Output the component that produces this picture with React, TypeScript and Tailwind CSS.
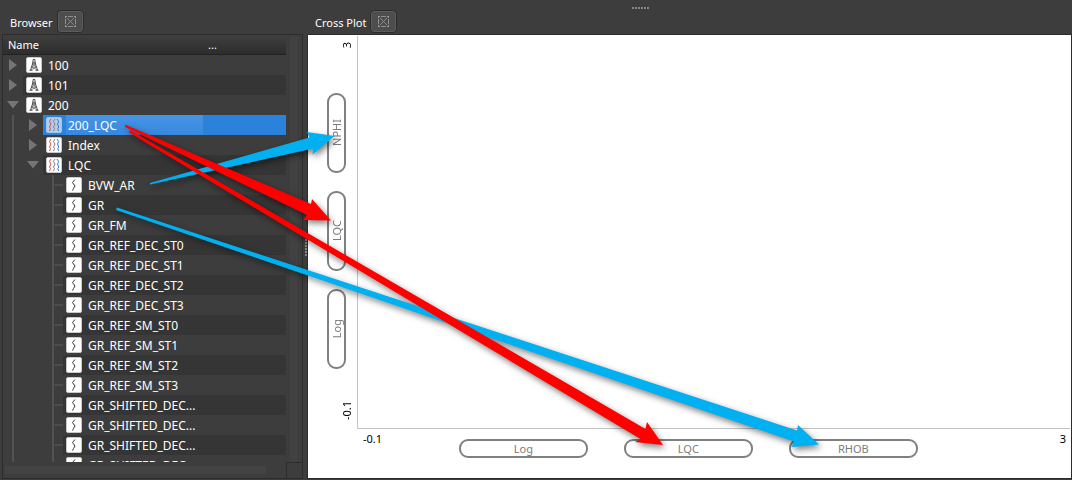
import React from "react";

type IconKind = "well" | "set" | "curve";
type Row = { label: string; level: number; icon: IconKind; open?: boolean; selected?: boolean };

const rows: Row[] = [
  { label: "100", level: 0, icon: "well", open: false },
  { label: "101", level: 0, icon: "well", open: false },
  { label: "200", level: 0, icon: "well", open: true },
  { label: "200_LQC", level: 1, icon: "set", open: false, selected: true },
  { label: "Index", level: 1, icon: "set", open: false },
  { label: "LQC", level: 1, icon: "set", open: true },
  ...[
    "BVW_AR",
    "GR",
    "GR_FM",
    "GR_REF_DEC_ST0",
    "GR_REF_DEC_ST1",
    "GR_REF_DEC_ST2",
    "GR_REF_DEC_ST3",
    "GR_REF_SM_ST0",
    "GR_REF_SM_ST1",
    "GR_REF_SM_ST2",
    "GR_REF_SM_ST3",
    "GR_SHIFTED_DEC...",
    "GR_SHIFTED_DEC...",
    "GR_SHIFTED_DEC...",
    "GR_SHIFTED_DEC...",
  ].map((label): Row => ({ label, level: 2, icon: "curve" })),
];

function NodeIcon({ kind, selected }: { kind: IconKind; selected?: boolean }) {
  return (
    <svg width="16" height="16" viewBox="0 0 16 16" className="shrink-0" fill="none" aria-hidden="true">
      <rect x="0.5" y="0.5" width="15" height="15" rx="1.5" fill={selected ? "#b4cdea" : "#fff"} stroke={selected ? "#a3c3e8" : "#c9c9c9"} />
      {kind === "well" && (
        <g stroke="#444" strokeWidth="0.9">
          <path d="M7 2.500h2M7.200 2.500L6.500 7 4.500 13M8.800 2.500L9.500 7l2 6M3.500 13.300h3M9.500 13.300h3" />
          <path d="M6.800 5.200h2.400M6.500 7.200h3L5.500 10h5L5 12.800M6.500 7.200l4 2.800M5.500 10l5.800 2.800M6.800 5.200l2.700 2M9.200 5.200l-2.700 2" strokeWidth="0.6" />
        </g>
      )}
      {kind === "set" && (
        <g strokeWidth="1">
          <path d="M5 2L3.500 4.500 5 7 3.500 10l1 1.500L3.500 14" stroke="#d2454f" />
          <path d="M9 2L7.300 4.500 9 7 7.500 10l1 1.500L7.500 14" stroke="#808080" />
          <path d="M11 2l1.700 2.500L11.500 7l1.300 3-1 1.500.8 2.500" stroke="#2f78cc" />
        </g>
      )}
      {kind === "curve" && <path d="M9 2.500L6.500 5.500 9 9l-1.500 2.500L6.500 13.500" stroke="#333" />}
    </svg>
  );
}

function Expander({ open }: { open?: boolean }) {
  return (
    <span className="flex w-5 shrink-0 items-center justify-center">
      <svg width="12" height="12" viewBox="0 0 12 12" fill="#757575" aria-hidden="true">
        <path d={open ? "M0 2h12L6 9.500z" : "M2 0v12l8-6z"} />
      </svg>
    </span>
  );
}

function Guides({ level }: { level: number }) {
  return (
    <>
      {level > 0 && (
        <span className="flex w-5 shrink-0 justify-center self-stretch">
          <span className="w-0.5 bg-[#525252]" />
        </span>
      )}
      {level > 1 && (
        <>
          <span className="w-5 shrink-0" />
          <span className="flex w-5 shrink-0 items-center pl-[9px]">
            <span className="w-0.5 self-stretch bg-[#525252]" />
            <span className="h-0.5 flex-1 bg-[#4c4c4c]" />
          </span>
        </>
      )}
    </>
  );
}

function TreeRow({ row, index }: { row: Row; index: number }) {
  const fill = row.selected ? "bg-[#2a82da]" : index % 2 === 1 ? "bg-[#353535]" : "";
  return (
    <li
      role="treeitem"
      aria-level={row.level + 1}
      aria-expanded={row.open}
      aria-selected={!!row.selected}
      className="flex h-5 shrink-0"
    >
      <Guides level={row.level} />
      {row.open !== undefined && <Expander open={row.open} />}
      <div className={`flex min-w-0 flex-1 items-center gap-1 pl-[3px] ${fill}`}>
        <NodeIcon kind={row.icon} selected={row.selected} />
        <span
          className={`flex-1 truncate pt-0.5 pl-0.5 text-[12px] leading-[18px] text-white ${
            row.selected ? "mr-[83px] bg-linear-to-b from-[#4894e4] to-[#3689de]" : ""
          }`}
        >
          {row.label}
        </span>
      </div>
    </li>
  );
}

function PanelTab({ title }: { title: string }) {
  return (
    <header className="flex h-[34px] shrink-0 items-end gap-1 pb-px pl-2">
      <h2 className="text-[11px] leading-5 text-white">{title}</h2>
      <button
        type="button"
        aria-label={`Close ${title}`}
        className="flex h-[23px] w-[27px] items-center justify-center rounded-sm border border-[#2c2c2c] bg-[#4d4d4d] shadow-[inset_0_0_0_1px_#5c5c5c]"
      >
        <svg width="11" height="11" viewBox="0 0 11 11" fill="none" stroke="#8f8f8f" aria-hidden="true">
          <path d="M3 .5h5M3 10.500h5M.5 3v5M10.500 3v5" />
          <path d="M0 .5h2M.5 0v2M9 .5h2M10.500 0v2M0 10.500h2M.5 9v2M9 10.500h2M10.500 9v2" stroke="#9a9a9a" />
          <path d="M2 2l7 7M9 2L2 9" stroke="#888" />
        </svg>
      </button>
    </header>
  );
}

function Slot({ label, vertical }: { label: string; vertical?: boolean }) {
  return (
    <button
      type="button"
      className={`flex items-center justify-center rounded-[9px] border-2 border-[#808080] bg-white text-[11px] leading-4 text-[#7c7c7c] ${
        vertical ? "h-20 w-[19px]" : "h-[19px] w-[129px]"
      }`}
    >
      <span className={vertical ? "rotate-180 [writing-mode:vertical-rl]" : ""}>{label}</span>
    </button>
  );
}

function Dots() {
  return (
    <>
      {[0, 1, 2, 3, 4, 5].map((n) => (
        <span key={n} className="size-0.5 bg-[#858585]" />
      ))}
    </>
  );
}

function Arrows() {
  return (
    <svg
      width="1072"
      height="480"
      viewBox="0 0 1072 480"
      className="pointer-events-none absolute top-0 left-0 [filter:drop-shadow(2px_3px_3px_rgba(0,0,0,0.5))]"
      aria-hidden="true"
    >
      <path fill="#00b0f0" d="M150 183L309.500 137.500 307 132 334.500 136 312.500 154.500 313.500 148.500 150 184.500z" />
      <path fill="#00b0f0" d="M117 207.500L797 430.500 798 425 819 444.500 791.500 447 794 441.500 116 210z" />
      <path fill="#f00" d="M125 124.500L311 204 312 199 331 220.500 303 220 307 215 125 127z" />
      <path fill="#f00" d="M130 130L645.500 429 647 422 663 445 635 442 640.500 439 129 132.500z" />
    </svg>
  );
}

export default function App() {
  return (
    <main className="relative flex h-screen overflow-hidden bg-[#3d3d3d] font-['Noto_Sans','Open_Sans',sans-serif]">
      <section className="flex w-[303px] shrink-0 flex-col pb-px pl-0.5" aria-label="Browser">
        <PanelTab title="Browser" />
        <div className="flex min-h-0 flex-1 flex-col border border-[#2c2c2c]">
          <div className="flex min-h-0 flex-1">
            <div className="flex min-w-0 flex-1 flex-col">
              <div className="flex h-5 shrink-0 items-center border-b border-[#222] bg-linear-to-b from-[#3f3f3f] to-[#2d2d2d] pt-0.5 pl-[5px] text-[11px] text-white">
                <span className="w-[200px]">Name</span>
                <span>...</span>
              </div>
              <ul role="tree" aria-label="Wells" className="flex min-h-0 flex-1 flex-col overflow-hidden">
                {rows.map((row, i) => (
                  <TreeRow key={i} row={row} index={i} />
                ))}
              </ul>
            </div>
            <div className="flex w-4 shrink-0 justify-center pt-0.5">
              <span className="w-2 bg-[#414141]" />
            </div>
          </div>
          <div className="flex h-4 shrink-0">
            <div className="flex flex-1 items-center pr-5 pl-0.5">
              <span className="h-2 flex-1 bg-[#434343]" />
            </div>
            <div className="w-4 border-t border-l border-[#2c2c2c]" />
          </div>
        </div>
      </section>

      <div className="flex w-1 shrink-0 flex-col items-end justify-center gap-px pt-3.5">
        <Dots />
      </div>

      <section className="flex min-w-0 flex-1 flex-col pb-px" aria-label="Cross Plot">
        <PanelTab title="Cross Plot" />
        <div className="flex min-h-0 flex-1 border border-[#2c2c2c] bg-white">
          <div className="flex w-[49px] shrink-0 flex-col items-end pt-[7px] pr-0.5 pb-[58px] text-[11px] leading-4 text-black">
            <span className="rotate-180 [writing-mode:vertical-rl]">3</span>
            <div className="flex flex-1 flex-col justify-center gap-[18px] pt-3 pr-[9px]">
              <Slot label="NPHI" vertical />
              <Slot label="LQC" vertical />
              <Slot label="Log" vertical />
            </div>
            <span className="rotate-180 [writing-mode:vertical-rl]">-0.1</span>
          </div>
          <div className="flex min-w-0 flex-1 flex-col">
            <div className="mt-px mr-px flex-1 border-b border-l border-[#c4c4c4]" />
            <div className="flex h-[49px] shrink-0 items-start justify-between pr-[5px] pl-1.5 text-[11px] leading-4 text-black">
              <span className="w-5 pt-0.5">-0.1</span>
              <div className="flex gap-9 pt-2.5 pr-[66px]">
                <Slot label="Log" />
                <Slot label="LQC" />
                <Slot label="RHOB" />
              </div>
              <span className="pt-0.5">3</span>
            </div>
          </div>
        </div>
      </section>

      <div className="absolute top-[7px] left-[632px] flex gap-px">
        <Dots />
      </div>
      <Arrows />
    </main>
  );
}
